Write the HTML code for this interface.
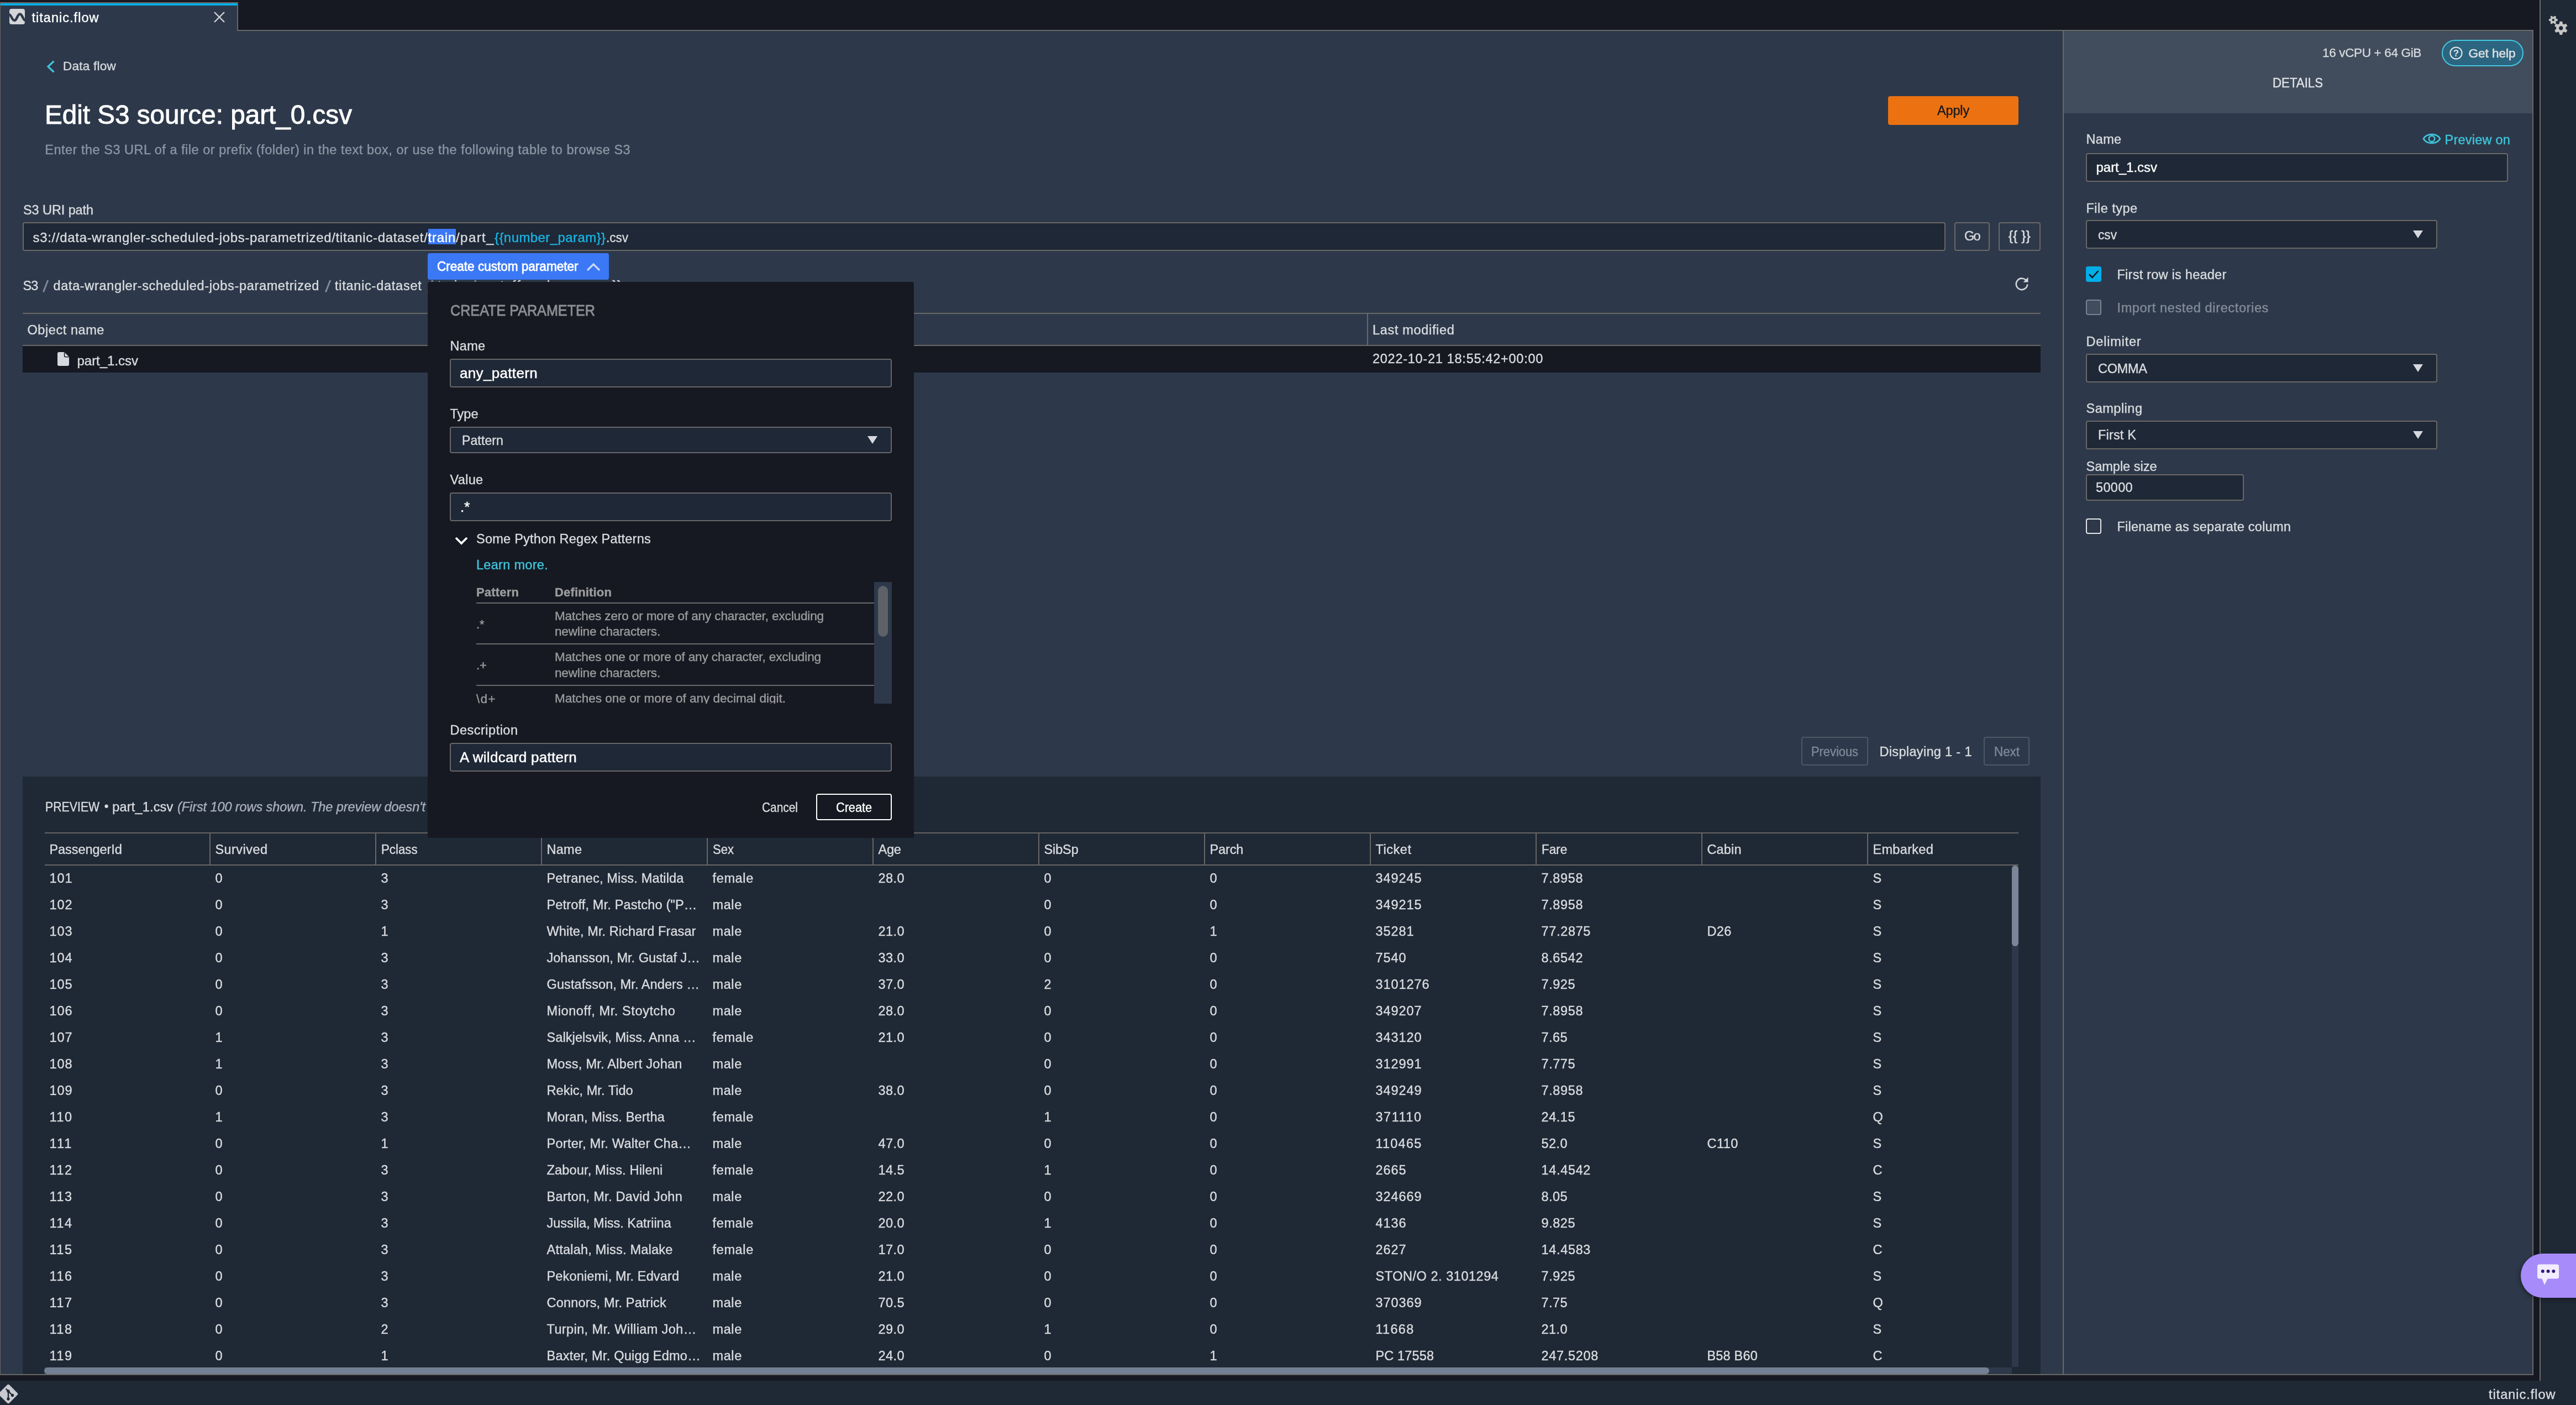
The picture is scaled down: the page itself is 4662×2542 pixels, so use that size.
<!DOCTYPE html>
<html><head><meta charset="utf-8"><title>titanic.flow</title>
<style>
html,body{margin:0;padding:0;}
body{width:4662px;height:2542px;overflow:hidden;background:#161922;font-family:"Liberation Sans",sans-serif;position:relative;}
div,span.t,svg{position:absolute;box-sizing:border-box;}
span.t{white-space:pre;-webkit-text-stroke:0.4px currentColor;}
#root{left:0;top:0;width:4662px;height:2542px;will-change:transform;overflow:hidden;}
</style></head><body><div id="root">
<div style="left:0px;top:0px;width:4662px;height:55px;background:#161922;"></div>
<div style="left:430px;top:54px;width:4155px;height:2px;background:#6a6866;"></div>
<div style="left:0px;top:56px;width:3735px;height:2432px;background:#2d394a;border-left:1px solid #6a6866;border-bottom:2px solid #6a6866;"></div>
<div style="left:0px;top:4px;width:431px;height:52px;background:#2d394a;border-left:1px solid #6a6866;border-right:2px solid #6a6866;border-top:2px solid #6a6866;"></div>
<div style="left:1px;top:6px;width:428px;height:4px;background:#00aee8;"></div>
<svg style="left:17px;top:16px" width="28" height="28" viewBox="0 0 28 28"><rect width="28" height="28" rx="4" fill="#d4d5d9"/><path d="M-2,9.5 C4,9.5 4,21 9,21 C14,21 14,9.5 19,9.5 C24,9.5 24,21 30,21.5" fill="none" stroke="#2d394a" stroke-width="4.4"/></svg>
<span class="t" style="left:57.50px;top:21.27px;font-size:23.5px;line-height:23.5px;color:#ffffff;letter-spacing:1.023px;">titanic.flow</span>
<svg style="left:386px;top:20px" width="22" height="22" viewBox="0 0 22 22"><path d="M2,2 L20,20 M20,2 L2,20" stroke="#d0d3d8" stroke-width="2.4" fill="none"/></svg>
<div style="left:3733px;top:56px;width:852px;height:2432px;background:#2d394a;border-left:2px solid #6a6866;border-right:2px solid #6a6866;border-bottom:2px solid #6a6866;"></div>
<div style="left:3735px;top:56px;width:848px;height:149px;background:#414d5c;"></div>
<div style="left:4596px;top:0px;width:66px;height:2499px;background:#1f2835;border-left:2px solid #6c6c6a;"></div>
<div style="left:0px;top:2498px;width:4662px;height:44px;background:#1f2835;"></div>
<svg style="left:84px;top:110px" width="16" height="22" viewBox="0 0 16 22"><path d="M12.5,1.5 L3,10.5 L12.5,19.5" stroke="#3fc6dd" stroke-width="3.2" fill="none" stroke-linejoin="miter" stroke-linecap="round"/></svg>
<span class="t" style="left:114.00px;top:109.27px;font-size:22.5px;line-height:22.5px;color:#d5d9de;letter-spacing:0.245px;">Data flow</span>
<span class="t" style="left:81.20px;top:182.77px;font-size:48.5px;line-height:48.5px;color:#ffffff;transform:scaleX(0.9821);transform-origin:0 0;-webkit-text-stroke-width:0.9px;">Edit S3 source: part_0.csv</span>
<span class="t" style="left:81.20px;top:260.27px;font-size:23.5px;line-height:23.5px;color:#8c95a3;letter-spacing:0.514px;">Enter the S3 URL of a file or prefix (folder) in the text box, or use the following table to browse S3</span>
<div style="left:3417px;top:174px;width:236px;height:52px;background:#ec7211;border-radius:4px;"></div>
<span class="t" style="left:3506.00px;top:189.27px;font-size:23.5px;line-height:23.5px;color:#16191f;letter-spacing:-0.159px;">Apply</span>
<span class="t" style="left:42.00px;top:369.27px;font-size:23.5px;line-height:23.5px;color:#d9dcdf;letter-spacing:-0.092px;">S3 URI path</span>
<div style="left:41px;top:402px;width:3480px;height:52px;background:#1f2836;border:2px solid #6a6866;border-radius:4px;"></div>
<span class="t" style="left:59.50px;top:417.52px;font-size:24px;line-height:24px;color:#d9dcdf;letter-spacing:0.677px;">s3://data-wrangler-scheduled-jobs-parametrized/titanic-dataset/</span>
<div style="left:774.5px;top:414px;width:50.5px;height:28px;background:#3b78f5;"></div>
<span class="t" style="left:774.50px;top:417.52px;font-size:24px;line-height:24px;color:#ffffff;letter-spacing:0.762px;">train</span>
<span class="t" style="left:825.00px;top:417.52px;font-size:24px;line-height:24px;color:#d9dcdf;letter-spacing:1.438px;">/part_</span>
<span class="t" style="left:895.00px;top:417.52px;font-size:24px;line-height:24px;color:#19b4e6;letter-spacing:0.418px;">{{number_param}}</span>
<span class="t" style="left:1096.50px;top:417.52px;font-size:24px;line-height:24px;color:#d9dcdf;transform:scaleX(0.9374);transform-origin:0 0;">.csv</span>
<div style="left:3537px;top:402px;width:64px;height:52px;border:2px solid #6a6866;border-radius:4px;"></div>
<span class="t" style="left:3555.00px;top:416.27px;font-size:23.5px;line-height:23.5px;color:#d9dcdf;letter-spacing:-1.680px;">Go</span>
<div style="left:3617px;top:402px;width:76px;height:52px;border:2px solid #6a6866;border-radius:4px;"></div>
<span class="t" style="left:3635.00px;top:416.27px;font-size:23.5px;line-height:23.5px;color:#d9dcdf;letter-spacing:0.412px;-webkit-text-stroke-width:0.7px;">{{ }}</span>
<span class="t" style="left:41.50px;top:506.27px;font-size:23.5px;line-height:23.5px;color:#d9dcdf;letter-spacing:-0.875px;">S3</span>
<svg style="left:77px;top:503px" width="12" height="28" viewBox="0 0 12 28"><path d="M1.4,25.6 L9.8,4" stroke="#848d9b" stroke-width="2.8" fill="none"/></svg>
<span class="t" style="left:96.50px;top:506.27px;font-size:23.5px;line-height:23.5px;color:#d9dcdf;letter-spacing:0.657px;">data-wrangler-scheduled-jobs-parametrized</span>
<svg style="left:587.5px;top:503px" width="12" height="28" viewBox="0 0 12 28"><path d="M1.4,25.6 L9.8,4" stroke="#848d9b" stroke-width="2.8" fill="none"/></svg>
<span class="t" style="left:606.00px;top:506.27px;font-size:23.5px;line-height:23.5px;color:#d9dcdf;letter-spacing:0.746px;">titanic-dataset</span>
<svg style="left:773px;top:503px" width="12" height="28" viewBox="0 0 12 28"><path d="M1.4,25.6 L9.8,4" stroke="#848d9b" stroke-width="2.8" fill="none"/></svg>
<span class="t" style="left:792.00px;top:506.27px;font-size:23.5px;line-height:23.5px;color:#d9dcdf;letter-spacing:0.856px;">train</span>
<svg style="left:851px;top:503px" width="12" height="28" viewBox="0 0 12 28"><path d="M1.4,25.6 L9.8,4" stroke="#848d9b" stroke-width="2.8" fill="none"/></svg>
<span class="t" style="left:870.00px;top:506.27px;font-size:23.5px;line-height:23.5px;color:#d9dcdf;letter-spacing:0.508px;">part_{{number_param}}</span>
<svg style="left:3644px;top:498px" width="30" height="30" viewBox="0 0 30 30"><path d="M23.5,10.2 A10.2,10.2 0 1 0 25.2,16.5" stroke="#d5d9de" stroke-width="2.6" fill="none"/><path d="M26.5,3.5 L26.5,12.5 L17.5,12.5 Z" fill="#d5d9de"/></svg>
<div style="left:41px;top:566px;width:3652px;height:2px;background:#6a6866;"></div>
<div style="left:41px;top:624px;width:3652px;height:2px;background:#6a6866;"></div>
<div style="left:2474px;top:568px;width:2px;height:56px;background:#6a6866;"></div>
<span class="t" style="left:49.50px;top:586.27px;font-size:23.5px;line-height:23.5px;color:#d9dcdf;letter-spacing:0.570px;">Object name</span>
<span class="t" style="left:2484.00px;top:586.27px;font-size:23.5px;line-height:23.5px;color:#d9dcdf;letter-spacing:0.671px;">Last modified</span>
<div style="left:41px;top:626px;width:3652px;height:48px;background:#161922;"></div>
<svg style="left:103.5px;top:636.5px" width="21" height="25" viewBox="0 0 22 26"><path d="M3,0 H13 L22,9 V23 a3,3 0 0 1 -3,3 H3 a3,3 0 0 1 -3,-3 V3 a3,3 0 0 1 3,-3 Z" fill="#d6d9dd"/><path d="M13,0 V6.5 a2.5,2.5 0 0 0 2.5,2.5 H22 Z" fill="#161922" opacity="0.0"/><path d="M13.2,0.5 V7 a2,2 0 0 0 2,2 H21.5" fill="none" stroke="#161922" stroke-width="1.6"/></svg>
<span class="t" style="left:139.50px;top:640.52px;font-size:24px;line-height:24px;color:#d9dcdf;letter-spacing:-0.022px;">part_1.csv</span>
<span class="t" style="left:2484.00px;top:638.27px;font-size:23.5px;line-height:23.5px;color:#d9dcdf;letter-spacing:0.730px;">2022-10-21 18:55:42+00:00</span>
<div style="left:3260px;top:1333px;width:121px;height:52px;border:2px solid #4e5765;border-radius:4px;"></div>
<span class="t" style="left:3278.00px;top:1349.27px;font-size:23.5px;line-height:23.5px;color:#7f8998;transform:scaleX(0.9296);transform-origin:0 0;">Previous</span>
<span class="t" style="left:3401.50px;top:1349.27px;font-size:23.5px;line-height:23.5px;color:#d9dcdf;letter-spacing:0.333px;">Displaying 1 - 1</span>
<div style="left:3590px;top:1333px;width:83px;height:52px;border:2px solid #4e5765;border-radius:4px;"></div>
<span class="t" style="left:3608.50px;top:1349.27px;font-size:23.5px;line-height:23.5px;color:#7f8998;transform:scaleX(0.9518);transform-origin:0 0;">Next</span>
<div style="left:41px;top:1405px;width:3652px;height:1081px;background:#1f2835;"></div>
<span class="t" style="left:82.00px;top:1449.27px;font-size:23.5px;line-height:23.5px;color:#d9dcdf;transform:scaleX(0.9060);transform-origin:0 0;">PREVIEW</span>
<span class="t" style="left:188.50px;top:1448.27px;font-size:23.5px;line-height:23.5px;color:#d9dcdf;-webkit-text-stroke-width:0px;">•</span>
<span class="t" style="left:203.20px;top:1449.27px;font-size:23.5px;line-height:23.5px;color:#d9dcdf;letter-spacing:0.188px;">part_1.csv</span>
<span class="t" style="left:321.00px;top:1449.27px;font-size:23.5px;line-height:23.5px;color:#a9b0bb;letter-spacing:-0.083px;font-style:italic;">(First 100 rows shown. The preview doesn&#x27;t</span>
<div style="left:81px;top:1506px;width:3572px;height:2px;background:#676664;"></div>
<div style="left:81px;top:1564px;width:3572px;height:2px;background:#676664;"></div>
<span class="t" style="left:89.50px;top:1526.27px;font-size:23.5px;line-height:23.5px;color:#d9dcdf;letter-spacing:-0.068px;">PassengerId</span>
<div style="left:379px;top:1508px;width:2px;height:56px;background:#676664;"></div>
<span class="t" style="left:389.50px;top:1526.27px;font-size:23.5px;line-height:23.5px;color:#d9dcdf;letter-spacing:0.433px;">Survived</span>
<div style="left:679px;top:1508px;width:2px;height:56px;background:#676664;"></div>
<span class="t" style="left:689.50px;top:1526.27px;font-size:23.5px;line-height:23.5px;color:#d9dcdf;transform:scaleX(0.9477);transform-origin:0 0;">Pclass</span>
<div style="left:979px;top:1508px;width:2px;height:56px;background:#676664;"></div>
<span class="t" style="left:989.50px;top:1526.27px;font-size:23.5px;line-height:23.5px;color:#d9dcdf;letter-spacing:0.278px;">Name</span>
<div style="left:1279px;top:1508px;width:2px;height:56px;background:#676664;"></div>
<span class="t" style="left:1289.50px;top:1526.27px;font-size:23.5px;line-height:23.5px;color:#d9dcdf;transform:scaleX(0.9383);transform-origin:0 0;">Sex</span>
<div style="left:1579px;top:1508px;width:2px;height:56px;background:#676664;"></div>
<span class="t" style="left:1589.50px;top:1526.27px;font-size:23.5px;line-height:23.5px;color:#d9dcdf;letter-spacing:-0.209px;">Age</span>
<div style="left:1879px;top:1508px;width:2px;height:56px;background:#676664;"></div>
<span class="t" style="left:1889.50px;top:1526.27px;font-size:23.5px;line-height:23.5px;color:#d9dcdf;letter-spacing:-0.124px;">SibSp</span>
<div style="left:2179px;top:1508px;width:2px;height:56px;background:#676664;"></div>
<span class="t" style="left:2189.50px;top:1526.27px;font-size:23.5px;line-height:23.5px;color:#d9dcdf;letter-spacing:-0.138px;">Parch</span>
<div style="left:2479px;top:1508px;width:2px;height:56px;background:#676664;"></div>
<span class="t" style="left:2489.50px;top:1526.27px;font-size:23.5px;line-height:23.5px;color:#d9dcdf;letter-spacing:0.531px;">Ticket</span>
<div style="left:2779px;top:1508px;width:2px;height:56px;background:#676664;"></div>
<span class="t" style="left:2789.50px;top:1526.27px;font-size:23.5px;line-height:23.5px;color:#d9dcdf;transform:scaleX(0.9601);transform-origin:0 0;">Fare</span>
<div style="left:3079px;top:1508px;width:2px;height:56px;background:#676664;"></div>
<span class="t" style="left:3089.50px;top:1526.27px;font-size:23.5px;line-height:23.5px;color:#d9dcdf;letter-spacing:0.139px;">Cabin</span>
<div style="left:3379px;top:1508px;width:2px;height:56px;background:#676664;"></div>
<span class="t" style="left:3389.50px;top:1526.27px;font-size:23.5px;line-height:23.5px;color:#d9dcdf;letter-spacing:0.311px;">Embarked</span>
<span class="t" style="left:89.50px;top:1578.27px;font-size:23.5px;line-height:23.5px;color:#d9dcdf;letter-spacing:0.927px;">101</span>
<span class="t" style="left:389.50px;top:1578.27px;font-size:23.5px;line-height:23.5px;color:#d9dcdf;letter-spacing:0.922px;">0</span>
<span class="t" style="left:689.50px;top:1578.27px;font-size:23.5px;line-height:23.5px;color:#d9dcdf;letter-spacing:0.922px;">3</span>
<span class="t" style="left:989.50px;top:1578.27px;font-size:23.5px;line-height:23.5px;color:#d9dcdf;letter-spacing:0.168px;">Petranec, Miss. Matilda</span>
<span class="t" style="left:1289.50px;top:1578.27px;font-size:23.5px;line-height:23.5px;color:#d9dcdf;letter-spacing:0.642px;">female</span>
<span class="t" style="left:1589.50px;top:1578.27px;font-size:23.5px;line-height:23.5px;color:#d9dcdf;letter-spacing:0.463px;">28.0</span>
<span class="t" style="left:1889.50px;top:1578.27px;font-size:23.5px;line-height:23.5px;color:#d9dcdf;letter-spacing:0.922px;">0</span>
<span class="t" style="left:2189.50px;top:1578.27px;font-size:23.5px;line-height:23.5px;color:#d9dcdf;letter-spacing:0.922px;">0</span>
<span class="t" style="left:2489.50px;top:1578.27px;font-size:23.5px;line-height:23.5px;color:#d9dcdf;letter-spacing:0.930px;">349245</span>
<span class="t" style="left:2789.50px;top:1578.27px;font-size:23.5px;line-height:23.5px;color:#d9dcdf;letter-spacing:0.618px;">7.8958</span>
<span class="t" style="left:3389.50px;top:1578.27px;font-size:23.5px;line-height:23.5px;color:#d9dcdf;letter-spacing:-1.199px;">S</span>
<span class="t" style="left:89.50px;top:1626.27px;font-size:23.5px;line-height:23.5px;color:#d9dcdf;letter-spacing:0.927px;">102</span>
<span class="t" style="left:389.50px;top:1626.27px;font-size:23.5px;line-height:23.5px;color:#d9dcdf;letter-spacing:0.922px;">0</span>
<span class="t" style="left:689.50px;top:1626.27px;font-size:23.5px;line-height:23.5px;color:#d9dcdf;letter-spacing:0.922px;">3</span>
<span class="t" style="left:989.50px;top:1626.27px;font-size:23.5px;line-height:23.5px;color:#d9dcdf;letter-spacing:0.163px;">Petroff, Mr. Pastcho (&quot;P…</span>
<span class="t" style="left:1289.50px;top:1626.27px;font-size:23.5px;line-height:23.5px;color:#d9dcdf;letter-spacing:0.591px;">male</span>
<span class="t" style="left:1889.50px;top:1626.27px;font-size:23.5px;line-height:23.5px;color:#d9dcdf;letter-spacing:0.922px;">0</span>
<span class="t" style="left:2189.50px;top:1626.27px;font-size:23.5px;line-height:23.5px;color:#d9dcdf;letter-spacing:0.922px;">0</span>
<span class="t" style="left:2489.50px;top:1626.27px;font-size:23.5px;line-height:23.5px;color:#d9dcdf;letter-spacing:0.930px;">349215</span>
<span class="t" style="left:2789.50px;top:1626.27px;font-size:23.5px;line-height:23.5px;color:#d9dcdf;letter-spacing:0.618px;">7.8958</span>
<span class="t" style="left:3389.50px;top:1626.27px;font-size:23.5px;line-height:23.5px;color:#d9dcdf;letter-spacing:-1.199px;">S</span>
<span class="t" style="left:89.50px;top:1674.27px;font-size:23.5px;line-height:23.5px;color:#d9dcdf;letter-spacing:0.927px;">103</span>
<span class="t" style="left:389.50px;top:1674.27px;font-size:23.5px;line-height:23.5px;color:#d9dcdf;letter-spacing:0.922px;">0</span>
<span class="t" style="left:689.50px;top:1674.27px;font-size:23.5px;line-height:23.5px;color:#d9dcdf;letter-spacing:0.922px;">1</span>
<span class="t" style="left:989.50px;top:1674.27px;font-size:23.5px;line-height:23.5px;color:#d9dcdf;letter-spacing:0.092px;">White, Mr. Richard Frasar</span>
<span class="t" style="left:1289.50px;top:1674.27px;font-size:23.5px;line-height:23.5px;color:#d9dcdf;letter-spacing:0.591px;">male</span>
<span class="t" style="left:1589.50px;top:1674.27px;font-size:23.5px;line-height:23.5px;color:#d9dcdf;letter-spacing:0.463px;">21.0</span>
<span class="t" style="left:1889.50px;top:1674.27px;font-size:23.5px;line-height:23.5px;color:#d9dcdf;letter-spacing:0.922px;">0</span>
<span class="t" style="left:2189.50px;top:1674.27px;font-size:23.5px;line-height:23.5px;color:#d9dcdf;letter-spacing:0.922px;">1</span>
<span class="t" style="left:2489.50px;top:1674.27px;font-size:23.5px;line-height:23.5px;color:#d9dcdf;letter-spacing:0.928px;">35281</span>
<span class="t" style="left:2789.50px;top:1674.27px;font-size:23.5px;line-height:23.5px;color:#d9dcdf;letter-spacing:0.664px;">77.2875</span>
<span class="t" style="left:3089.50px;top:1674.27px;font-size:23.5px;line-height:23.5px;color:#d9dcdf;letter-spacing:0.392px;">D26</span>
<span class="t" style="left:3389.50px;top:1674.27px;font-size:23.5px;line-height:23.5px;color:#d9dcdf;letter-spacing:-1.199px;">S</span>
<span class="t" style="left:89.50px;top:1722.27px;font-size:23.5px;line-height:23.5px;color:#d9dcdf;letter-spacing:0.927px;">104</span>
<span class="t" style="left:389.50px;top:1722.27px;font-size:23.5px;line-height:23.5px;color:#d9dcdf;letter-spacing:0.922px;">0</span>
<span class="t" style="left:689.50px;top:1722.27px;font-size:23.5px;line-height:23.5px;color:#d9dcdf;letter-spacing:0.922px;">3</span>
<span class="t" style="left:989.50px;top:1722.27px;font-size:23.5px;line-height:23.5px;color:#d9dcdf;letter-spacing:0.016px;">Johansson, Mr. Gustaf J…</span>
<span class="t" style="left:1289.50px;top:1722.27px;font-size:23.5px;line-height:23.5px;color:#d9dcdf;letter-spacing:0.591px;">male</span>
<span class="t" style="left:1589.50px;top:1722.27px;font-size:23.5px;line-height:23.5px;color:#d9dcdf;letter-spacing:0.463px;">33.0</span>
<span class="t" style="left:1889.50px;top:1722.27px;font-size:23.5px;line-height:23.5px;color:#d9dcdf;letter-spacing:0.922px;">0</span>
<span class="t" style="left:2189.50px;top:1722.27px;font-size:23.5px;line-height:23.5px;color:#d9dcdf;letter-spacing:0.922px;">0</span>
<span class="t" style="left:2489.50px;top:1722.27px;font-size:23.5px;line-height:23.5px;color:#d9dcdf;letter-spacing:0.930px;">7540</span>
<span class="t" style="left:2789.50px;top:1722.27px;font-size:23.5px;line-height:23.5px;color:#d9dcdf;letter-spacing:0.618px;">8.6542</span>
<span class="t" style="left:3389.50px;top:1722.27px;font-size:23.5px;line-height:23.5px;color:#d9dcdf;letter-spacing:-1.199px;">S</span>
<span class="t" style="left:89.50px;top:1770.27px;font-size:23.5px;line-height:23.5px;color:#d9dcdf;letter-spacing:0.927px;">105</span>
<span class="t" style="left:389.50px;top:1770.27px;font-size:23.5px;line-height:23.5px;color:#d9dcdf;letter-spacing:0.922px;">0</span>
<span class="t" style="left:689.50px;top:1770.27px;font-size:23.5px;line-height:23.5px;color:#d9dcdf;letter-spacing:0.922px;">3</span>
<span class="t" style="left:989.50px;top:1770.27px;font-size:23.5px;line-height:23.5px;color:#d9dcdf;letter-spacing:0.097px;">Gustafsson, Mr. Anders …</span>
<span class="t" style="left:1289.50px;top:1770.27px;font-size:23.5px;line-height:23.5px;color:#d9dcdf;letter-spacing:0.591px;">male</span>
<span class="t" style="left:1589.50px;top:1770.27px;font-size:23.5px;line-height:23.5px;color:#d9dcdf;letter-spacing:0.463px;">37.0</span>
<span class="t" style="left:1889.50px;top:1770.27px;font-size:23.5px;line-height:23.5px;color:#d9dcdf;letter-spacing:0.922px;">2</span>
<span class="t" style="left:2189.50px;top:1770.27px;font-size:23.5px;line-height:23.5px;color:#d9dcdf;letter-spacing:0.922px;">0</span>
<span class="t" style="left:2489.50px;top:1770.27px;font-size:23.5px;line-height:23.5px;color:#d9dcdf;letter-spacing:0.929px;">3101276</span>
<span class="t" style="left:2789.50px;top:1770.27px;font-size:23.5px;line-height:23.5px;color:#d9dcdf;letter-spacing:0.558px;">7.925</span>
<span class="t" style="left:3389.50px;top:1770.27px;font-size:23.5px;line-height:23.5px;color:#d9dcdf;letter-spacing:-1.199px;">S</span>
<span class="t" style="left:89.50px;top:1818.27px;font-size:23.5px;line-height:23.5px;color:#d9dcdf;letter-spacing:0.927px;">106</span>
<span class="t" style="left:389.50px;top:1818.27px;font-size:23.5px;line-height:23.5px;color:#d9dcdf;letter-spacing:0.922px;">0</span>
<span class="t" style="left:689.50px;top:1818.27px;font-size:23.5px;line-height:23.5px;color:#d9dcdf;letter-spacing:0.922px;">3</span>
<span class="t" style="left:989.50px;top:1818.27px;font-size:23.5px;line-height:23.5px;color:#d9dcdf;letter-spacing:0.595px;">Mionoff, Mr. Stoytcho</span>
<span class="t" style="left:1289.50px;top:1818.27px;font-size:23.5px;line-height:23.5px;color:#d9dcdf;letter-spacing:0.591px;">male</span>
<span class="t" style="left:1589.50px;top:1818.27px;font-size:23.5px;line-height:23.5px;color:#d9dcdf;letter-spacing:0.463px;">28.0</span>
<span class="t" style="left:1889.50px;top:1818.27px;font-size:23.5px;line-height:23.5px;color:#d9dcdf;letter-spacing:0.922px;">0</span>
<span class="t" style="left:2189.50px;top:1818.27px;font-size:23.5px;line-height:23.5px;color:#d9dcdf;letter-spacing:0.922px;">0</span>
<span class="t" style="left:2489.50px;top:1818.27px;font-size:23.5px;line-height:23.5px;color:#d9dcdf;letter-spacing:0.930px;">349207</span>
<span class="t" style="left:2789.50px;top:1818.27px;font-size:23.5px;line-height:23.5px;color:#d9dcdf;letter-spacing:0.618px;">7.8958</span>
<span class="t" style="left:3389.50px;top:1818.27px;font-size:23.5px;line-height:23.5px;color:#d9dcdf;letter-spacing:-1.199px;">S</span>
<span class="t" style="left:89.50px;top:1866.27px;font-size:23.5px;line-height:23.5px;color:#d9dcdf;letter-spacing:0.927px;">107</span>
<span class="t" style="left:389.50px;top:1866.27px;font-size:23.5px;line-height:23.5px;color:#d9dcdf;letter-spacing:0.922px;">1</span>
<span class="t" style="left:689.50px;top:1866.27px;font-size:23.5px;line-height:23.5px;color:#d9dcdf;letter-spacing:0.922px;">3</span>
<span class="t" style="left:989.50px;top:1866.27px;font-size:23.5px;line-height:23.5px;color:#d9dcdf;letter-spacing:0.091px;">Salkjelsvik, Miss. Anna …</span>
<span class="t" style="left:1289.50px;top:1866.27px;font-size:23.5px;line-height:23.5px;color:#d9dcdf;letter-spacing:0.642px;">female</span>
<span class="t" style="left:1589.50px;top:1866.27px;font-size:23.5px;line-height:23.5px;color:#d9dcdf;letter-spacing:0.463px;">21.0</span>
<span class="t" style="left:1889.50px;top:1866.27px;font-size:23.5px;line-height:23.5px;color:#d9dcdf;letter-spacing:0.922px;">0</span>
<span class="t" style="left:2189.50px;top:1866.27px;font-size:23.5px;line-height:23.5px;color:#d9dcdf;letter-spacing:0.922px;">0</span>
<span class="t" style="left:2489.50px;top:1866.27px;font-size:23.5px;line-height:23.5px;color:#d9dcdf;letter-spacing:0.930px;">343120</span>
<span class="t" style="left:2789.50px;top:1866.27px;font-size:23.5px;line-height:23.5px;color:#d9dcdf;letter-spacing:0.463px;">7.65</span>
<span class="t" style="left:3389.50px;top:1866.27px;font-size:23.5px;line-height:23.5px;color:#d9dcdf;letter-spacing:-1.199px;">S</span>
<span class="t" style="left:89.50px;top:1914.27px;font-size:23.5px;line-height:23.5px;color:#d9dcdf;letter-spacing:0.927px;">108</span>
<span class="t" style="left:389.50px;top:1914.27px;font-size:23.5px;line-height:23.5px;color:#d9dcdf;letter-spacing:0.922px;">1</span>
<span class="t" style="left:689.50px;top:1914.27px;font-size:23.5px;line-height:23.5px;color:#d9dcdf;letter-spacing:0.922px;">3</span>
<span class="t" style="left:989.50px;top:1914.27px;font-size:23.5px;line-height:23.5px;color:#d9dcdf;letter-spacing:0.280px;">Moss, Mr. Albert Johan</span>
<span class="t" style="left:1289.50px;top:1914.27px;font-size:23.5px;line-height:23.5px;color:#d9dcdf;letter-spacing:0.591px;">male</span>
<span class="t" style="left:1889.50px;top:1914.27px;font-size:23.5px;line-height:23.5px;color:#d9dcdf;letter-spacing:0.922px;">0</span>
<span class="t" style="left:2189.50px;top:1914.27px;font-size:23.5px;line-height:23.5px;color:#d9dcdf;letter-spacing:0.922px;">0</span>
<span class="t" style="left:2489.50px;top:1914.27px;font-size:23.5px;line-height:23.5px;color:#d9dcdf;letter-spacing:0.930px;">312991</span>
<span class="t" style="left:2789.50px;top:1914.27px;font-size:23.5px;line-height:23.5px;color:#d9dcdf;letter-spacing:0.558px;">7.775</span>
<span class="t" style="left:3389.50px;top:1914.27px;font-size:23.5px;line-height:23.5px;color:#d9dcdf;letter-spacing:-1.199px;">S</span>
<span class="t" style="left:89.50px;top:1962.27px;font-size:23.5px;line-height:23.5px;color:#d9dcdf;letter-spacing:0.927px;">109</span>
<span class="t" style="left:389.50px;top:1962.27px;font-size:23.5px;line-height:23.5px;color:#d9dcdf;letter-spacing:0.922px;">0</span>
<span class="t" style="left:689.50px;top:1962.27px;font-size:23.5px;line-height:23.5px;color:#d9dcdf;letter-spacing:0.922px;">3</span>
<span class="t" style="left:989.50px;top:1962.27px;font-size:23.5px;line-height:23.5px;color:#d9dcdf;letter-spacing:0.053px;">Rekic, Mr. Tido</span>
<span class="t" style="left:1289.50px;top:1962.27px;font-size:23.5px;line-height:23.5px;color:#d9dcdf;letter-spacing:0.591px;">male</span>
<span class="t" style="left:1589.50px;top:1962.27px;font-size:23.5px;line-height:23.5px;color:#d9dcdf;letter-spacing:0.463px;">38.0</span>
<span class="t" style="left:1889.50px;top:1962.27px;font-size:23.5px;line-height:23.5px;color:#d9dcdf;letter-spacing:0.922px;">0</span>
<span class="t" style="left:2189.50px;top:1962.27px;font-size:23.5px;line-height:23.5px;color:#d9dcdf;letter-spacing:0.922px;">0</span>
<span class="t" style="left:2489.50px;top:1962.27px;font-size:23.5px;line-height:23.5px;color:#d9dcdf;letter-spacing:0.930px;">349249</span>
<span class="t" style="left:2789.50px;top:1962.27px;font-size:23.5px;line-height:23.5px;color:#d9dcdf;letter-spacing:0.618px;">7.8958</span>
<span class="t" style="left:3389.50px;top:1962.27px;font-size:23.5px;line-height:23.5px;color:#d9dcdf;letter-spacing:-1.199px;">S</span>
<span class="t" style="left:89.50px;top:2010.27px;font-size:23.5px;line-height:23.5px;color:#d9dcdf;letter-spacing:1.510px;">110</span>
<span class="t" style="left:389.50px;top:2010.27px;font-size:23.5px;line-height:23.5px;color:#d9dcdf;letter-spacing:0.922px;">1</span>
<span class="t" style="left:689.50px;top:2010.27px;font-size:23.5px;line-height:23.5px;color:#d9dcdf;letter-spacing:0.922px;">3</span>
<span class="t" style="left:989.50px;top:2010.27px;font-size:23.5px;line-height:23.5px;color:#d9dcdf;letter-spacing:0.170px;">Moran, Miss. Bertha</span>
<span class="t" style="left:1289.50px;top:2010.27px;font-size:23.5px;line-height:23.5px;color:#d9dcdf;letter-spacing:0.642px;">female</span>
<span class="t" style="left:1889.50px;top:2010.27px;font-size:23.5px;line-height:23.5px;color:#d9dcdf;letter-spacing:0.922px;">1</span>
<span class="t" style="left:2189.50px;top:2010.27px;font-size:23.5px;line-height:23.5px;color:#d9dcdf;letter-spacing:0.922px;">0</span>
<span class="t" style="left:2489.50px;top:2010.27px;font-size:23.5px;line-height:23.5px;color:#d9dcdf;letter-spacing:1.510px;">371110</span>
<span class="t" style="left:2789.50px;top:2010.27px;font-size:23.5px;line-height:23.5px;color:#d9dcdf;letter-spacing:0.558px;">24.15</span>
<span class="t" style="left:3389.50px;top:2010.27px;font-size:23.5px;line-height:23.5px;color:#d9dcdf;letter-spacing:-1.033px;">Q</span>
<span class="t" style="left:89.50px;top:2058.27px;font-size:23.5px;line-height:23.5px;color:#d9dcdf;letter-spacing:2.089px;">111</span>
<span class="t" style="left:389.50px;top:2058.27px;font-size:23.5px;line-height:23.5px;color:#d9dcdf;letter-spacing:0.922px;">0</span>
<span class="t" style="left:689.50px;top:2058.27px;font-size:23.5px;line-height:23.5px;color:#d9dcdf;letter-spacing:0.922px;">1</span>
<span class="t" style="left:989.50px;top:2058.27px;font-size:23.5px;line-height:23.5px;color:#d9dcdf;letter-spacing:0.283px;">Porter, Mr. Walter Cha…</span>
<span class="t" style="left:1289.50px;top:2058.27px;font-size:23.5px;line-height:23.5px;color:#d9dcdf;letter-spacing:0.591px;">male</span>
<span class="t" style="left:1589.50px;top:2058.27px;font-size:23.5px;line-height:23.5px;color:#d9dcdf;letter-spacing:0.463px;">47.0</span>
<span class="t" style="left:1889.50px;top:2058.27px;font-size:23.5px;line-height:23.5px;color:#d9dcdf;letter-spacing:0.922px;">0</span>
<span class="t" style="left:2189.50px;top:2058.27px;font-size:23.5px;line-height:23.5px;color:#d9dcdf;letter-spacing:0.922px;">0</span>
<span class="t" style="left:2489.50px;top:2058.27px;font-size:23.5px;line-height:23.5px;color:#d9dcdf;letter-spacing:1.219px;">110465</span>
<span class="t" style="left:2789.50px;top:2058.27px;font-size:23.5px;line-height:23.5px;color:#d9dcdf;letter-spacing:0.463px;">52.0</span>
<span class="t" style="left:3089.50px;top:2058.27px;font-size:23.5px;line-height:23.5px;color:#d9dcdf;letter-spacing:0.491px;">C110</span>
<span class="t" style="left:3389.50px;top:2058.27px;font-size:23.5px;line-height:23.5px;color:#d9dcdf;letter-spacing:-1.199px;">S</span>
<span class="t" style="left:89.50px;top:2106.27px;font-size:23.5px;line-height:23.5px;color:#d9dcdf;letter-spacing:1.510px;">112</span>
<span class="t" style="left:389.50px;top:2106.27px;font-size:23.5px;line-height:23.5px;color:#d9dcdf;letter-spacing:0.922px;">0</span>
<span class="t" style="left:689.50px;top:2106.27px;font-size:23.5px;line-height:23.5px;color:#d9dcdf;letter-spacing:0.922px;">3</span>
<span class="t" style="left:989.50px;top:2106.27px;font-size:23.5px;line-height:23.5px;color:#d9dcdf;letter-spacing:0.172px;">Zabour, Miss. Hileni</span>
<span class="t" style="left:1289.50px;top:2106.27px;font-size:23.5px;line-height:23.5px;color:#d9dcdf;letter-spacing:0.642px;">female</span>
<span class="t" style="left:1589.50px;top:2106.27px;font-size:23.5px;line-height:23.5px;color:#d9dcdf;letter-spacing:0.463px;">14.5</span>
<span class="t" style="left:1889.50px;top:2106.27px;font-size:23.5px;line-height:23.5px;color:#d9dcdf;letter-spacing:0.922px;">1</span>
<span class="t" style="left:2189.50px;top:2106.27px;font-size:23.5px;line-height:23.5px;color:#d9dcdf;letter-spacing:0.922px;">0</span>
<span class="t" style="left:2489.50px;top:2106.27px;font-size:23.5px;line-height:23.5px;color:#d9dcdf;letter-spacing:0.930px;">2665</span>
<span class="t" style="left:2789.50px;top:2106.27px;font-size:23.5px;line-height:23.5px;color:#d9dcdf;letter-spacing:0.664px;">14.4542</span>
<span class="t" style="left:3389.50px;top:2106.27px;font-size:23.5px;line-height:23.5px;color:#d9dcdf;letter-spacing:-1.116px;">C</span>
<span class="t" style="left:89.50px;top:2154.27px;font-size:23.5px;line-height:23.5px;color:#d9dcdf;letter-spacing:1.510px;">113</span>
<span class="t" style="left:389.50px;top:2154.27px;font-size:23.5px;line-height:23.5px;color:#d9dcdf;letter-spacing:0.922px;">0</span>
<span class="t" style="left:689.50px;top:2154.27px;font-size:23.5px;line-height:23.5px;color:#d9dcdf;letter-spacing:0.922px;">3</span>
<span class="t" style="left:989.50px;top:2154.27px;font-size:23.5px;line-height:23.5px;color:#d9dcdf;letter-spacing:0.299px;">Barton, Mr. David John</span>
<span class="t" style="left:1289.50px;top:2154.27px;font-size:23.5px;line-height:23.5px;color:#d9dcdf;letter-spacing:0.591px;">male</span>
<span class="t" style="left:1589.50px;top:2154.27px;font-size:23.5px;line-height:23.5px;color:#d9dcdf;letter-spacing:0.463px;">22.0</span>
<span class="t" style="left:1889.50px;top:2154.27px;font-size:23.5px;line-height:23.5px;color:#d9dcdf;letter-spacing:0.922px;">0</span>
<span class="t" style="left:2189.50px;top:2154.27px;font-size:23.5px;line-height:23.5px;color:#d9dcdf;letter-spacing:0.922px;">0</span>
<span class="t" style="left:2489.50px;top:2154.27px;font-size:23.5px;line-height:23.5px;color:#d9dcdf;letter-spacing:0.930px;">324669</span>
<span class="t" style="left:2789.50px;top:2154.27px;font-size:23.5px;line-height:23.5px;color:#d9dcdf;letter-spacing:0.463px;">8.05</span>
<span class="t" style="left:3389.50px;top:2154.27px;font-size:23.5px;line-height:23.5px;color:#d9dcdf;letter-spacing:-1.199px;">S</span>
<span class="t" style="left:89.50px;top:2202.27px;font-size:23.5px;line-height:23.5px;color:#d9dcdf;letter-spacing:1.510px;">114</span>
<span class="t" style="left:389.50px;top:2202.27px;font-size:23.5px;line-height:23.5px;color:#d9dcdf;letter-spacing:0.922px;">0</span>
<span class="t" style="left:689.50px;top:2202.27px;font-size:23.5px;line-height:23.5px;color:#d9dcdf;letter-spacing:0.922px;">3</span>
<span class="t" style="left:989.50px;top:2202.27px;font-size:23.5px;line-height:23.5px;color:#d9dcdf;letter-spacing:-0.032px;">Jussila, Miss. Katriina</span>
<span class="t" style="left:1289.50px;top:2202.27px;font-size:23.5px;line-height:23.5px;color:#d9dcdf;letter-spacing:0.642px;">female</span>
<span class="t" style="left:1589.50px;top:2202.27px;font-size:23.5px;line-height:23.5px;color:#d9dcdf;letter-spacing:0.463px;">20.0</span>
<span class="t" style="left:1889.50px;top:2202.27px;font-size:23.5px;line-height:23.5px;color:#d9dcdf;letter-spacing:0.922px;">1</span>
<span class="t" style="left:2189.50px;top:2202.27px;font-size:23.5px;line-height:23.5px;color:#d9dcdf;letter-spacing:0.922px;">0</span>
<span class="t" style="left:2489.50px;top:2202.27px;font-size:23.5px;line-height:23.5px;color:#d9dcdf;letter-spacing:0.930px;">4136</span>
<span class="t" style="left:2789.50px;top:2202.27px;font-size:23.5px;line-height:23.5px;color:#d9dcdf;letter-spacing:0.558px;">9.825</span>
<span class="t" style="left:3389.50px;top:2202.27px;font-size:23.5px;line-height:23.5px;color:#d9dcdf;letter-spacing:-1.199px;">S</span>
<span class="t" style="left:89.50px;top:2250.27px;font-size:23.5px;line-height:23.5px;color:#d9dcdf;letter-spacing:1.510px;">115</span>
<span class="t" style="left:389.50px;top:2250.27px;font-size:23.5px;line-height:23.5px;color:#d9dcdf;letter-spacing:0.922px;">0</span>
<span class="t" style="left:689.50px;top:2250.27px;font-size:23.5px;line-height:23.5px;color:#d9dcdf;letter-spacing:0.922px;">3</span>
<span class="t" style="left:989.50px;top:2250.27px;font-size:23.5px;line-height:23.5px;color:#d9dcdf;letter-spacing:0.222px;">Attalah, Miss. Malake</span>
<span class="t" style="left:1289.50px;top:2250.27px;font-size:23.5px;line-height:23.5px;color:#d9dcdf;letter-spacing:0.642px;">female</span>
<span class="t" style="left:1589.50px;top:2250.27px;font-size:23.5px;line-height:23.5px;color:#d9dcdf;letter-spacing:0.463px;">17.0</span>
<span class="t" style="left:1889.50px;top:2250.27px;font-size:23.5px;line-height:23.5px;color:#d9dcdf;letter-spacing:0.922px;">0</span>
<span class="t" style="left:2189.50px;top:2250.27px;font-size:23.5px;line-height:23.5px;color:#d9dcdf;letter-spacing:0.922px;">0</span>
<span class="t" style="left:2489.50px;top:2250.27px;font-size:23.5px;line-height:23.5px;color:#d9dcdf;letter-spacing:0.930px;">2627</span>
<span class="t" style="left:2789.50px;top:2250.27px;font-size:23.5px;line-height:23.5px;color:#d9dcdf;letter-spacing:0.664px;">14.4583</span>
<span class="t" style="left:3389.50px;top:2250.27px;font-size:23.5px;line-height:23.5px;color:#d9dcdf;letter-spacing:-1.116px;">C</span>
<span class="t" style="left:89.50px;top:2298.27px;font-size:23.5px;line-height:23.5px;color:#d9dcdf;letter-spacing:1.510px;">116</span>
<span class="t" style="left:389.50px;top:2298.27px;font-size:23.5px;line-height:23.5px;color:#d9dcdf;letter-spacing:0.922px;">0</span>
<span class="t" style="left:689.50px;top:2298.27px;font-size:23.5px;line-height:23.5px;color:#d9dcdf;letter-spacing:0.922px;">3</span>
<span class="t" style="left:989.50px;top:2298.27px;font-size:23.5px;line-height:23.5px;color:#d9dcdf;letter-spacing:0.157px;">Pekoniemi, Mr. Edvard</span>
<span class="t" style="left:1289.50px;top:2298.27px;font-size:23.5px;line-height:23.5px;color:#d9dcdf;letter-spacing:0.591px;">male</span>
<span class="t" style="left:1589.50px;top:2298.27px;font-size:23.5px;line-height:23.5px;color:#d9dcdf;letter-spacing:0.463px;">21.0</span>
<span class="t" style="left:1889.50px;top:2298.27px;font-size:23.5px;line-height:23.5px;color:#d9dcdf;letter-spacing:0.922px;">0</span>
<span class="t" style="left:2189.50px;top:2298.27px;font-size:23.5px;line-height:23.5px;color:#d9dcdf;letter-spacing:0.922px;">0</span>
<span class="t" style="left:2489.50px;top:2298.27px;font-size:23.5px;line-height:23.5px;color:#d9dcdf;letter-spacing:0.535px;">STON/O 2. 3101294</span>
<span class="t" style="left:2789.50px;top:2298.27px;font-size:23.5px;line-height:23.5px;color:#d9dcdf;letter-spacing:0.558px;">7.925</span>
<span class="t" style="left:3389.50px;top:2298.27px;font-size:23.5px;line-height:23.5px;color:#d9dcdf;letter-spacing:-1.199px;">S</span>
<span class="t" style="left:89.50px;top:2346.27px;font-size:23.5px;line-height:23.5px;color:#d9dcdf;letter-spacing:1.510px;">117</span>
<span class="t" style="left:389.50px;top:2346.27px;font-size:23.5px;line-height:23.5px;color:#d9dcdf;letter-spacing:0.922px;">0</span>
<span class="t" style="left:689.50px;top:2346.27px;font-size:23.5px;line-height:23.5px;color:#d9dcdf;letter-spacing:0.922px;">3</span>
<span class="t" style="left:989.50px;top:2346.27px;font-size:23.5px;line-height:23.5px;color:#d9dcdf;letter-spacing:0.176px;">Connors, Mr. Patrick</span>
<span class="t" style="left:1289.50px;top:2346.27px;font-size:23.5px;line-height:23.5px;color:#d9dcdf;letter-spacing:0.591px;">male</span>
<span class="t" style="left:1589.50px;top:2346.27px;font-size:23.5px;line-height:23.5px;color:#d9dcdf;letter-spacing:0.463px;">70.5</span>
<span class="t" style="left:1889.50px;top:2346.27px;font-size:23.5px;line-height:23.5px;color:#d9dcdf;letter-spacing:0.922px;">0</span>
<span class="t" style="left:2189.50px;top:2346.27px;font-size:23.5px;line-height:23.5px;color:#d9dcdf;letter-spacing:0.922px;">0</span>
<span class="t" style="left:2489.50px;top:2346.27px;font-size:23.5px;line-height:23.5px;color:#d9dcdf;letter-spacing:0.930px;">370369</span>
<span class="t" style="left:2789.50px;top:2346.27px;font-size:23.5px;line-height:23.5px;color:#d9dcdf;letter-spacing:0.463px;">7.75</span>
<span class="t" style="left:3389.50px;top:2346.27px;font-size:23.5px;line-height:23.5px;color:#d9dcdf;letter-spacing:-1.033px;">Q</span>
<span class="t" style="left:89.50px;top:2394.27px;font-size:23.5px;line-height:23.5px;color:#d9dcdf;letter-spacing:1.510px;">118</span>
<span class="t" style="left:389.50px;top:2394.27px;font-size:23.5px;line-height:23.5px;color:#d9dcdf;letter-spacing:0.922px;">0</span>
<span class="t" style="left:689.50px;top:2394.27px;font-size:23.5px;line-height:23.5px;color:#d9dcdf;letter-spacing:0.922px;">2</span>
<span class="t" style="left:989.50px;top:2394.27px;font-size:23.5px;line-height:23.5px;color:#d9dcdf;letter-spacing:0.396px;">Turpin, Mr. William Joh…</span>
<span class="t" style="left:1289.50px;top:2394.27px;font-size:23.5px;line-height:23.5px;color:#d9dcdf;letter-spacing:0.591px;">male</span>
<span class="t" style="left:1589.50px;top:2394.27px;font-size:23.5px;line-height:23.5px;color:#d9dcdf;letter-spacing:0.463px;">29.0</span>
<span class="t" style="left:1889.50px;top:2394.27px;font-size:23.5px;line-height:23.5px;color:#d9dcdf;letter-spacing:0.922px;">1</span>
<span class="t" style="left:2189.50px;top:2394.27px;font-size:23.5px;line-height:23.5px;color:#d9dcdf;letter-spacing:0.922px;">0</span>
<span class="t" style="left:2489.50px;top:2394.27px;font-size:23.5px;line-height:23.5px;color:#d9dcdf;letter-spacing:1.278px;">11668</span>
<span class="t" style="left:2789.50px;top:2394.27px;font-size:23.5px;line-height:23.5px;color:#d9dcdf;letter-spacing:0.463px;">21.0</span>
<span class="t" style="left:3389.50px;top:2394.27px;font-size:23.5px;line-height:23.5px;color:#d9dcdf;letter-spacing:-1.199px;">S</span>
<span class="t" style="left:89.50px;top:2442.27px;font-size:23.5px;line-height:23.5px;color:#d9dcdf;letter-spacing:1.510px;">119</span>
<span class="t" style="left:389.50px;top:2442.27px;font-size:23.5px;line-height:23.5px;color:#d9dcdf;letter-spacing:0.922px;">0</span>
<span class="t" style="left:689.50px;top:2442.27px;font-size:23.5px;line-height:23.5px;color:#d9dcdf;letter-spacing:0.922px;">1</span>
<span class="t" style="left:989.50px;top:2442.27px;font-size:23.5px;line-height:23.5px;color:#d9dcdf;letter-spacing:0.235px;">Baxter, Mr. Quigg Edmo…</span>
<span class="t" style="left:1289.50px;top:2442.27px;font-size:23.5px;line-height:23.5px;color:#d9dcdf;letter-spacing:0.591px;">male</span>
<span class="t" style="left:1589.50px;top:2442.27px;font-size:23.5px;line-height:23.5px;color:#d9dcdf;letter-spacing:0.463px;">24.0</span>
<span class="t" style="left:1889.50px;top:2442.27px;font-size:23.5px;line-height:23.5px;color:#d9dcdf;letter-spacing:0.922px;">0</span>
<span class="t" style="left:2189.50px;top:2442.27px;font-size:23.5px;line-height:23.5px;color:#d9dcdf;letter-spacing:0.922px;">1</span>
<span class="t" style="left:2489.50px;top:2442.27px;font-size:23.5px;line-height:23.5px;color:#d9dcdf;letter-spacing:0.146px;">PC 17558</span>
<span class="t" style="left:2789.50px;top:2442.27px;font-size:23.5px;line-height:23.5px;color:#d9dcdf;letter-spacing:0.696px;">247.5208</span>
<span class="t" style="left:3089.50px;top:2442.27px;font-size:23.5px;line-height:23.5px;color:#d9dcdf;letter-spacing:0.178px;">B58 B60</span>
<span class="t" style="left:3389.50px;top:2442.27px;font-size:23.5px;line-height:23.5px;color:#d9dcdf;letter-spacing:-1.116px;">C</span>
<div style="left:3641px;top:1566px;width:12px;height:908px;background:#2d394a;"></div>
<div style="left:3641px;top:1566px;width:12px;height:146px;background:#7a8698;border-radius:6px;"></div>
<div style="left:80px;top:2474px;width:3573px;height:12px;background:#2d394a;"></div>
<div style="left:80px;top:2474px;width:3520px;height:12px;background:#738093;border-radius:6px;"></div>
<div style="left:3641px;top:2473px;width:12px;height:13px;background:#1f2835;"></div>
<span class="t" style="left:4203.00px;top:85.27px;font-size:22.5px;line-height:22.5px;color:#d9dcdf;letter-spacing:-0.342px;-webkit-text-stroke-width:0.3px;">16 vCPU + 64 GiB</span>
<div style="left:4419px;top:72px;width:148px;height:48px;background:#2c6580;border:2px solid #43c8e2;border-radius:24px;"></div>
<svg style="left:4432px;top:83px" width="26" height="26" viewBox="0 0 26 26"><circle cx="13" cy="13" r="10.6" fill="none" stroke="#e4e6ea" stroke-width="2"/><text x="13" y="19" text-anchor="middle" font-family="Liberation Sans" font-size="17" font-weight="700" fill="#e4e6ea">?</text></svg>
<span class="t" style="left:4467.50px;top:86.27px;font-size:22.5px;line-height:22.5px;color:#d9dcdf;letter-spacing:-0.008px;-webkit-text-stroke-width:0.7px;">Get help</span>
<span class="t" style="left:4113.10px;top:137.52px;font-size:24px;line-height:24px;color:#dfe2e6;transform:scaleX(0.9262);transform-origin:0 0;">DETAILS</span>
<span class="t" style="left:3775.50px;top:241.27px;font-size:23.5px;line-height:23.5px;color:#d9dcdf;letter-spacing:0.328px;">Name</span>
<svg style="left:4384px;top:238px" width="34" height="26" viewBox="0 0 34 26"><path d="M2,13 C8,2.5 26,2.5 32,13 C26,23.5 8,23.5 2,13 Z" fill="none" stroke="#3fc6dd" stroke-width="2.6"/><circle cx="17" cy="13" r="5.2" fill="none" stroke="#3fc6dd" stroke-width="2.6"/></svg>
<span class="t" style="left:4424.50px;top:242.27px;font-size:23.5px;line-height:23.5px;color:#3fc6dd;letter-spacing:0.225px;">Preview on</span>
<div style="left:3775px;top:277px;width:764px;height:52px;background:#1f2836;border:2px solid #6a6866;border-radius:4px;"></div>
<span class="t" style="left:3793.50px;top:290.52px;font-size:24px;line-height:24px;color:#ffffff;letter-spacing:-0.022px;-webkit-text-stroke-width:0.4px;">part_1.csv</span>
<span class="t" style="left:3775.50px;top:366.27px;font-size:23.5px;line-height:23.5px;color:#d9dcdf;letter-spacing:0.464px;">File type</span>
<div style="left:3775px;top:398px;width:636px;height:52px;background:#1f2836;border:2px solid #6a6866;border-radius:4px;"></div>
<span class="t" style="left:3797.00px;top:414.27px;font-size:23.5px;line-height:23.5px;color:#d9dcdf;transform:scaleX(0.9645);transform-origin:0 0;">csv</span>
<svg style="left:4367px;top:416.5px" width="18" height="14" viewBox="0 0 18 14"><path d="M0,0 H18 L9,14 Z" fill="#d5d9de"/></svg>
<div style="left:3775px;top:482px;width:28px;height:28px;background:#00aee8;border-radius:4px;"></div>
<svg style="left:3775px;top:482px" width="28" height="28" viewBox="0 0 28 28"><path d="M6,14.5 L11.5,20 L22.5,8" fill="none" stroke="#0b0d12" stroke-width="2.5"/></svg>
<span class="t" style="left:3831.50px;top:486.27px;font-size:23.5px;line-height:23.5px;color:#d9dcdf;letter-spacing:0.248px;">First row is header</span>
<div style="left:3775px;top:542px;width:28px;height:28px;background:#414c5c;border:2px solid #7b8492;border-radius:4px;"></div>
<span class="t" style="left:3831.50px;top:546.27px;font-size:23.5px;line-height:23.5px;color:#838b98;letter-spacing:0.635px;">Import nested directories</span>
<span class="t" style="left:3775.50px;top:607.27px;font-size:23.5px;line-height:23.5px;color:#d9dcdf;letter-spacing:0.809px;">Delimiter</span>
<div style="left:3775px;top:640px;width:636px;height:52px;background:#1f2836;border:2px solid #6a6866;border-radius:4px;"></div>
<span class="t" style="left:3797.00px;top:656.27px;font-size:23.5px;line-height:23.5px;color:#d9dcdf;letter-spacing:-0.316px;">COMMA</span>
<svg style="left:4367px;top:658.5px" width="18" height="14" viewBox="0 0 18 14"><path d="M0,0 H18 L9,14 Z" fill="#d5d9de"/></svg>
<span class="t" style="left:3775.50px;top:728.27px;font-size:23.5px;line-height:23.5px;color:#d9dcdf;letter-spacing:0.502px;">Sampling</span>
<div style="left:3775px;top:761px;width:636px;height:52px;background:#1f2836;border:2px solid #6a6866;border-radius:4px;"></div>
<span class="t" style="left:3797.00px;top:776.27px;font-size:23.5px;line-height:23.5px;color:#d9dcdf;letter-spacing:0.158px;">First K</span>
<svg style="left:4367px;top:779.5px" width="18" height="14" viewBox="0 0 18 14"><path d="M0,0 H18 L9,14 Z" fill="#d5d9de"/></svg>
<span class="t" style="left:3775.50px;top:833.27px;font-size:23.5px;line-height:23.5px;color:#d9dcdf;">Sample size</span>
<div style="left:3775px;top:858px;width:286px;height:48px;background:#1f2836;border:2px solid #6a6866;border-radius:4px;"></div>
<span class="t" style="left:3793.00px;top:871.27px;font-size:23.5px;line-height:23.5px;color:#d9dcdf;letter-spacing:0.328px;-webkit-text-stroke-width:0.4px;">50000</span>
<div style="left:3775px;top:938px;width:28px;height:28px;border:2px solid #e4e6ea;border-radius:4px;"></div>
<span class="t" style="left:3831.50px;top:942.27px;font-size:23.5px;line-height:23.5px;color:#d9dcdf;letter-spacing:0.231px;">Filename as separate column</span>
<div style="left:774px;top:458px;width:328px;height:48px;background:#3b78f5;border-radius:4px;"></div>
<span class="t" style="left:790.50px;top:471.27px;font-size:23.5px;line-height:23.5px;color:#ffffff;transform:scaleX(0.9589);transform-origin:0 0;-webkit-text-stroke-width:0.8px;">Create custom parameter</span>
<svg style="left:1061px;top:475px" width="26" height="16" viewBox="0 0 26 16"><path d="M2,14 L13,3 L24,14" fill="none" stroke="#c9d8fc" stroke-width="3.2"/></svg>
<div style="left:774px;top:510px;width:880px;height:1006px;background:#161921;border-radius:4px;"></div>
<span class="t" style="left:814.50px;top:546.77px;font-size:28.5px;line-height:28.5px;color:#8d8f94;transform:scaleX(0.8832);transform-origin:0 0;-webkit-text-stroke-width:0.9px;">CREATE PARAMETER</span>
<span class="t" style="left:814.50px;top:615.27px;font-size:23.5px;line-height:23.5px;color:#d9dcdf;letter-spacing:0.328px;">Name</span>
<div style="left:814px;top:649px;width:800px;height:52px;background:#1f2836;border:2px solid #67676a;border-radius:4px;"></div>
<span class="t" style="left:832.00px;top:662.02px;font-size:26px;line-height:26px;color:#ffffff;letter-spacing:0.334px;-webkit-text-stroke-width:0.5px;">any_pattern</span>
<span class="t" style="left:814.50px;top:738.27px;font-size:23.5px;line-height:23.5px;color:#d9dcdf;letter-spacing:0.012px;">Type</span>
<div style="left:814px;top:772px;width:800px;height:48px;background:#1f2836;border:2px solid #67676a;border-radius:4px;"></div>
<span class="t" style="left:836.00px;top:785.52px;font-size:23px;line-height:23px;color:#d9dcdf;letter-spacing:0.121px;">Pattern</span>
<svg style="left:1570px;top:789px" width="18" height="14" viewBox="0 0 18 14"><path d="M0,0 H18 L9,14 Z" fill="#d5d9de"/></svg>
<span class="t" style="left:814.50px;top:857.27px;font-size:23.5px;line-height:23.5px;color:#d9dcdf;letter-spacing:0.325px;">Value</span>
<div style="left:814px;top:891px;width:800px;height:52px;background:#1f2836;border:2px solid #67676a;border-radius:4px;"></div>
<span class="t" style="left:833.00px;top:904.02px;font-size:26px;line-height:26px;color:#ffffff;-webkit-text-stroke-width:0.5px;">.*</span>
<svg style="left:822px;top:970px" width="26" height="18" viewBox="0 0 26 18"><path d="M3,3 L13,13 L23,3" fill="none" stroke="#ffffff" stroke-width="3.8"/></svg>
<span class="t" style="left:862.00px;top:964.27px;font-size:23.5px;line-height:23.5px;color:#d9dcdf;letter-spacing:0.246px;">Some Python Regex Patterns</span>
<span class="t" style="left:862.00px;top:1011.27px;font-size:23.5px;line-height:23.5px;color:#3fc6dd;letter-spacing:0.300px;">Learn more.</span>
<span class="t" style="left:862.00px;top:1060.52px;font-size:22px;line-height:22px;color:#9c9c9e;letter-spacing:0.172px;font-weight:700;">Pattern</span>
<span class="t" style="left:1004.00px;top:1060.52px;font-size:22px;line-height:22px;color:#9c9c9e;letter-spacing:0.156px;font-weight:700;">Definition</span>
<div style="left:862px;top:1090px;width:720px;height:2px;background:#6a6a6c;"></div>
<div style="left:862px;top:1164px;width:720px;height:2px;background:#6a6a6c;"></div>
<div style="left:862px;top:1239px;width:720px;height:2px;background:#6a6a6c;"></div>
<span class="t" style="left:862.00px;top:1118.52px;font-size:22px;line-height:22px;color:#9c9c9e;-webkit-text-stroke-width:0.4px;">.*</span>
<span class="t" style="left:1004.00px;top:1104.27px;font-size:22.5px;line-height:22.5px;color:#9c9c9e;letter-spacing:-0.120px;">Matches zero or more of any character, excluding</span>
<span class="t" style="left:1004.00px;top:1132.27px;font-size:22.5px;line-height:22.5px;color:#9c9c9e;letter-spacing:-0.150px;">newline characters.</span>
<span class="t" style="left:862.00px;top:1192.52px;font-size:22px;line-height:22px;color:#9c9c9e;-webkit-text-stroke-width:0.4px;">.+</span>
<span class="t" style="left:1004.00px;top:1178.27px;font-size:22.5px;line-height:22.5px;color:#9c9c9e;letter-spacing:-0.096px;">Matches one or more of any character, excluding</span>
<span class="t" style="left:1004.00px;top:1207.27px;font-size:22.5px;line-height:22.5px;color:#9c9c9e;letter-spacing:-0.150px;">newline characters.</span>
<div style="left:855px;top:1242px;width:727px;height:31px;overflow:hidden">
<span class="t" style="left:7.00px;top:11.52px;font-size:22px;line-height:22px;color:#9c9c9e;letter-spacing:1.599px;">\d+</span>
<span class="t" style="left:149.00px;top:11.27px;font-size:22.5px;line-height:22.5px;color:#9c9c9e;letter-spacing:0.007px;">Matches one or more of any decimal digit.</span>
</div>
<div style="left:1582px;top:1053px;width:32px;height:220px;background:#2d394a;"></div>
<div style="left:1589px;top:1060px;width:18px;height:92px;background:#5e6268;border-radius:9px;"></div>
<span class="t" style="left:814.50px;top:1310.27px;font-size:23.5px;line-height:23.5px;color:#d9dcdf;letter-spacing:0.496px;">Description</span>
<div style="left:814px;top:1344px;width:800px;height:52px;background:#1f2836;border:2px solid #67676a;border-radius:4px;"></div>
<span class="t" style="left:832.00px;top:1357.02px;font-size:26px;line-height:26px;color:#ffffff;letter-spacing:0.296px;-webkit-text-stroke-width:0.5px;">A wildcard pattern</span>
<span class="t" style="left:1379.00px;top:1450.27px;font-size:23.5px;line-height:23.5px;color:#d9dcdf;transform:scaleX(0.8885);transform-origin:0 0;">Cancel</span>
<div style="left:1477px;top:1436px;width:137px;height:48px;border:2px solid #ffffff;border-radius:4px;"></div>
<span class="t" style="left:1513.00px;top:1450.27px;font-size:23.5px;line-height:23.5px;color:#ffffff;transform:scaleX(0.9214);transform-origin:0 0;">Create</span>
<svg style="left:4608px;top:24px" width="44" height="44" viewBox="4608 24 44 44"><path d="M4625.86,37.74 L4628.28,37.45 L4628.28,34.75 L4625.86,34.46 L4624.75,32.54 L4625.71,30.30 L4623.37,28.95 L4621.91,30.90 L4619.69,30.90 L4618.23,28.95 L4615.89,30.30 L4616.85,32.54 L4615.74,34.46 L4613.32,34.75 L4613.32,37.45 L4615.74,37.74 L4616.85,39.66 L4615.89,41.90 L4618.23,43.25 L4619.69,41.30 L4621.91,41.30 L4623.37,43.25 L4625.71,41.90 L4624.75,39.66 Z M4623.40,36.10 A2.60,2.60 0 1 0 4618.20,36.10 A2.60,2.60 0 1 0 4623.40,36.10 Z" fill="#c6c6c6" fill-rule="evenodd" stroke="#c6c6c6" stroke-width="1" stroke-linejoin="round"/><path d="M4637.35,43.04 L4636.89,39.29 L4632.71,39.29 L4632.25,43.04 L4629.27,44.76 L4625.79,43.28 L4623.70,46.90 L4626.72,49.18 L4626.72,52.62 L4623.70,54.90 L4625.79,58.52 L4629.27,57.04 L4632.25,58.76 L4632.71,62.51 L4636.89,62.51 L4637.35,58.76 L4640.33,57.04 L4643.81,58.52 L4645.90,54.90 L4642.88,52.62 L4642.88,49.18 L4645.90,46.90 L4643.81,43.28 L4640.33,44.76 Z M4639.00,50.90 A4.20,4.20 0 1 0 4630.60,50.90 A4.20,4.20 0 1 0 4639.00,50.90 Z" fill="#c6c6c6" fill-rule="evenodd" stroke="#c6c6c6" stroke-width="1" stroke-linejoin="round"/></svg>
<div style="left:4562px;top:2268px;width:140px;height:80px;background:#a78bfa;border-radius:40px;box-shadow:-2px 3px 8px rgba(0,0,0,0.35);"></div>
<svg style="left:4592px;top:2287px" width="41" height="40" viewBox="0 0 44 42"><path d="M4,0 H38 a4,4 0 0 1 4,4 V24 a4,4 0 0 1 -4,4 H20 L14,40 L9,28 H4 a4,4 0 0 1 -4,-4 V4 a4,4 0 0 1 4,-4 Z" fill="#f1ecfe"/><circle cx="10.5" cy="13.5" r="3.2" fill="#2e1a7a"/><circle cx="21" cy="13.5" r="3.2" fill="#2e1a7a"/><circle cx="31.5" cy="13.5" r="3.2" fill="#2e1a7a"/></svg>
<span class="t" style="left:4504.00px;top:2512.27px;font-size:23.5px;line-height:23.5px;color:#d9dcdf;letter-spacing:0.982px;">titanic.flow</span>
<svg style="left:-4px;top:2503px" width="38" height="38" viewBox="0 0 38 38"><rect x="6" y="6" width="26" height="26" rx="3" transform="rotate(45 19 19)" fill="#c8cacf"/><path d="M14.5,9.5 L19,14 V28 M19,14 L26,21" stroke="#1f2835" stroke-width="2.4" fill="none"/><circle cx="19" cy="14" r="2.7" fill="#1f2835"/><circle cx="19" cy="28" r="2.7" fill="#1f2835"/><circle cx="26.5" cy="21.5" r="2.7" fill="#1f2835"/></svg>
</div></body></html>
